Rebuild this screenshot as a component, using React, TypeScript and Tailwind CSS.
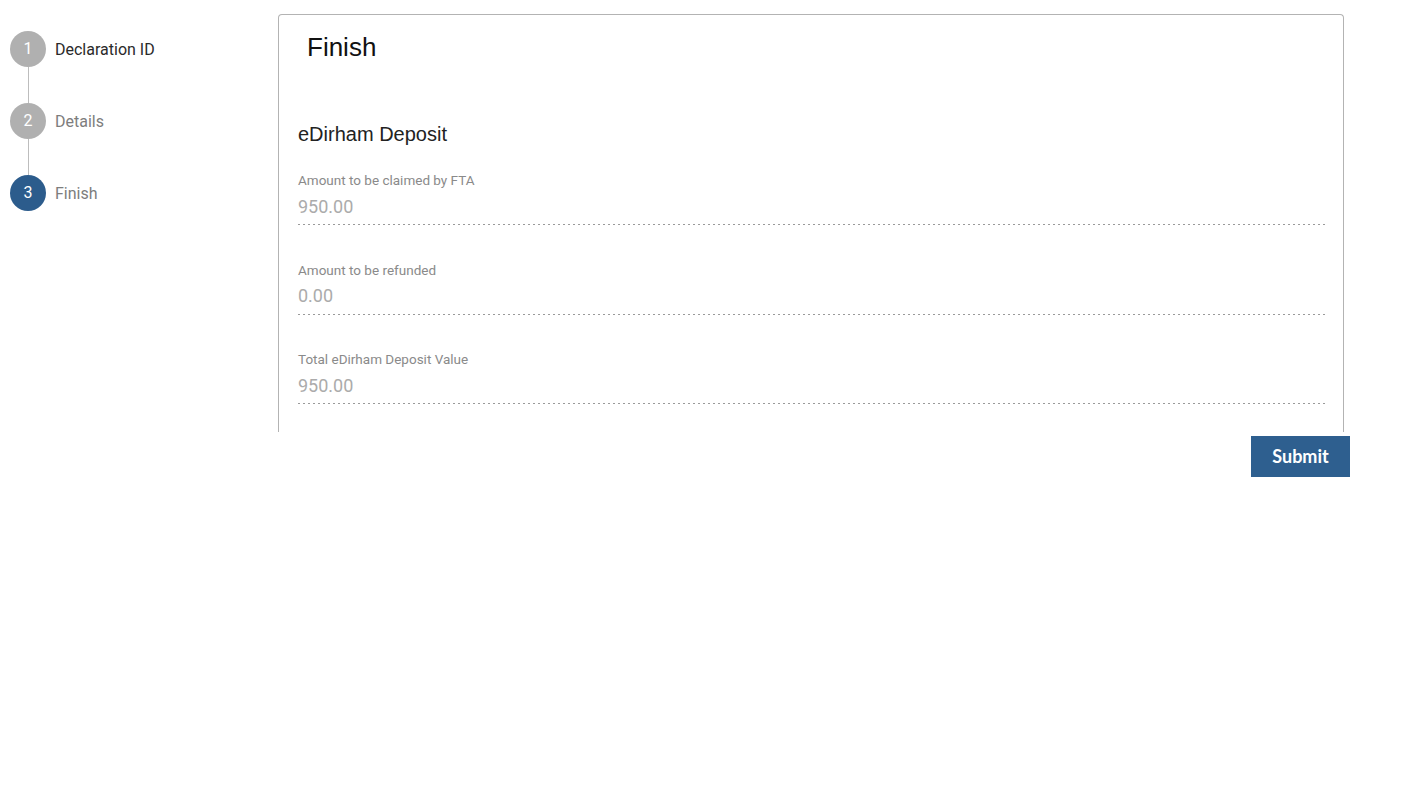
import React from "react";

const steps = [
  { n: 1, label: "Declaration ID", active: false, dark: true },
  { n: 2, label: "Details", active: false, dark: false },
  { n: 3, label: "Finish", active: true, dark: false },
];

const fields = [
  { label: "Amount to be claimed by FTA", value: "950.00" },
  { label: "Amount to be refunded", value: "0.00" },
  { label: "Total eDirham Deposit Value", value: "950.00" },
];

export default function App() {
  return (
    <div className="flex w-[1414px] h-[801px] bg-white font-['Roboto',sans-serif]">
      <div className="w-[278px] shrink-0 pt-[31px] pl-[10px] flex flex-col">
        {steps.map((s, i) => (
          <div key={s.n} className="flex flex-col">
            <div className="flex items-center">
              <div
                className={`w-[36px] h-[36px] rounded-full flex items-center justify-center text-white text-[16px] ${
                  s.active ? "bg-[#2c5c8c]" : "bg-[#b0b0b0]"
                }`}
              >
                {s.n}
              </div>
              <span
                className={`ml-[9px] mt-[2px] text-[16px] leading-[20px] ${
                  s.dark ? "text-[#2a2a2a]" : "text-[#7d7d7d]"
                }`}
              >
                {s.label}
              </span>
            </div>
            {i < steps.length - 1 && (
              <div className="ml-[17.5px] w-px h-[36px] bg-[#bdbdbd]" />
            )}
          </div>
        ))}
      </div>
      <div className="flex flex-col pt-[14px]">
        <div className="w-[1066px] h-[418px] border border-b-0 border-[#b3b3b3] rounded-t-[4px] pt-[17px] pl-[19px] pr-[17px] flex flex-col">
          <div className="pl-[9px] text-[26px] leading-[30px] text-[#111] font-['Liberation_Sans',Arial,sans-serif]">
            Finish
          </div>
          <div className="mt-[60px] text-[20px] leading-[24px] text-[#222] font-['Liberation_Sans',Arial,sans-serif]">
            eDirham Deposit
          </div>
          <div className="mt-[24px] flex flex-col gap-[34.5px]">
            {fields.map((f) => (
              <div key={f.label} className="flex flex-col">
                <div className="text-[13.5px] leading-[20px] text-[#8a8a8a]">{f.label}</div>
                <div className="mt-[3.5px] text-[18px] leading-[26px] text-[#ababab] pb-[4.5px]">{f.value}</div>
                <div className="h-px bg-[repeating-linear-gradient(to_right,#9a9a9a_0px,#9a9a9a_2px,transparent_2px,transparent_5px)]" />
              </div>
            ))}
          </div>
        </div>
        <div className="flex justify-end w-[1072px] mt-[4px]">
          <button className="w-[99px] h-[41px] bg-[#2e5f8f] text-white text-[18px] font-bold font-['Lato','Open_Sans',sans-serif]">
            Submit
          </button>
        </div>
      </div>
    </div>
  );
}
